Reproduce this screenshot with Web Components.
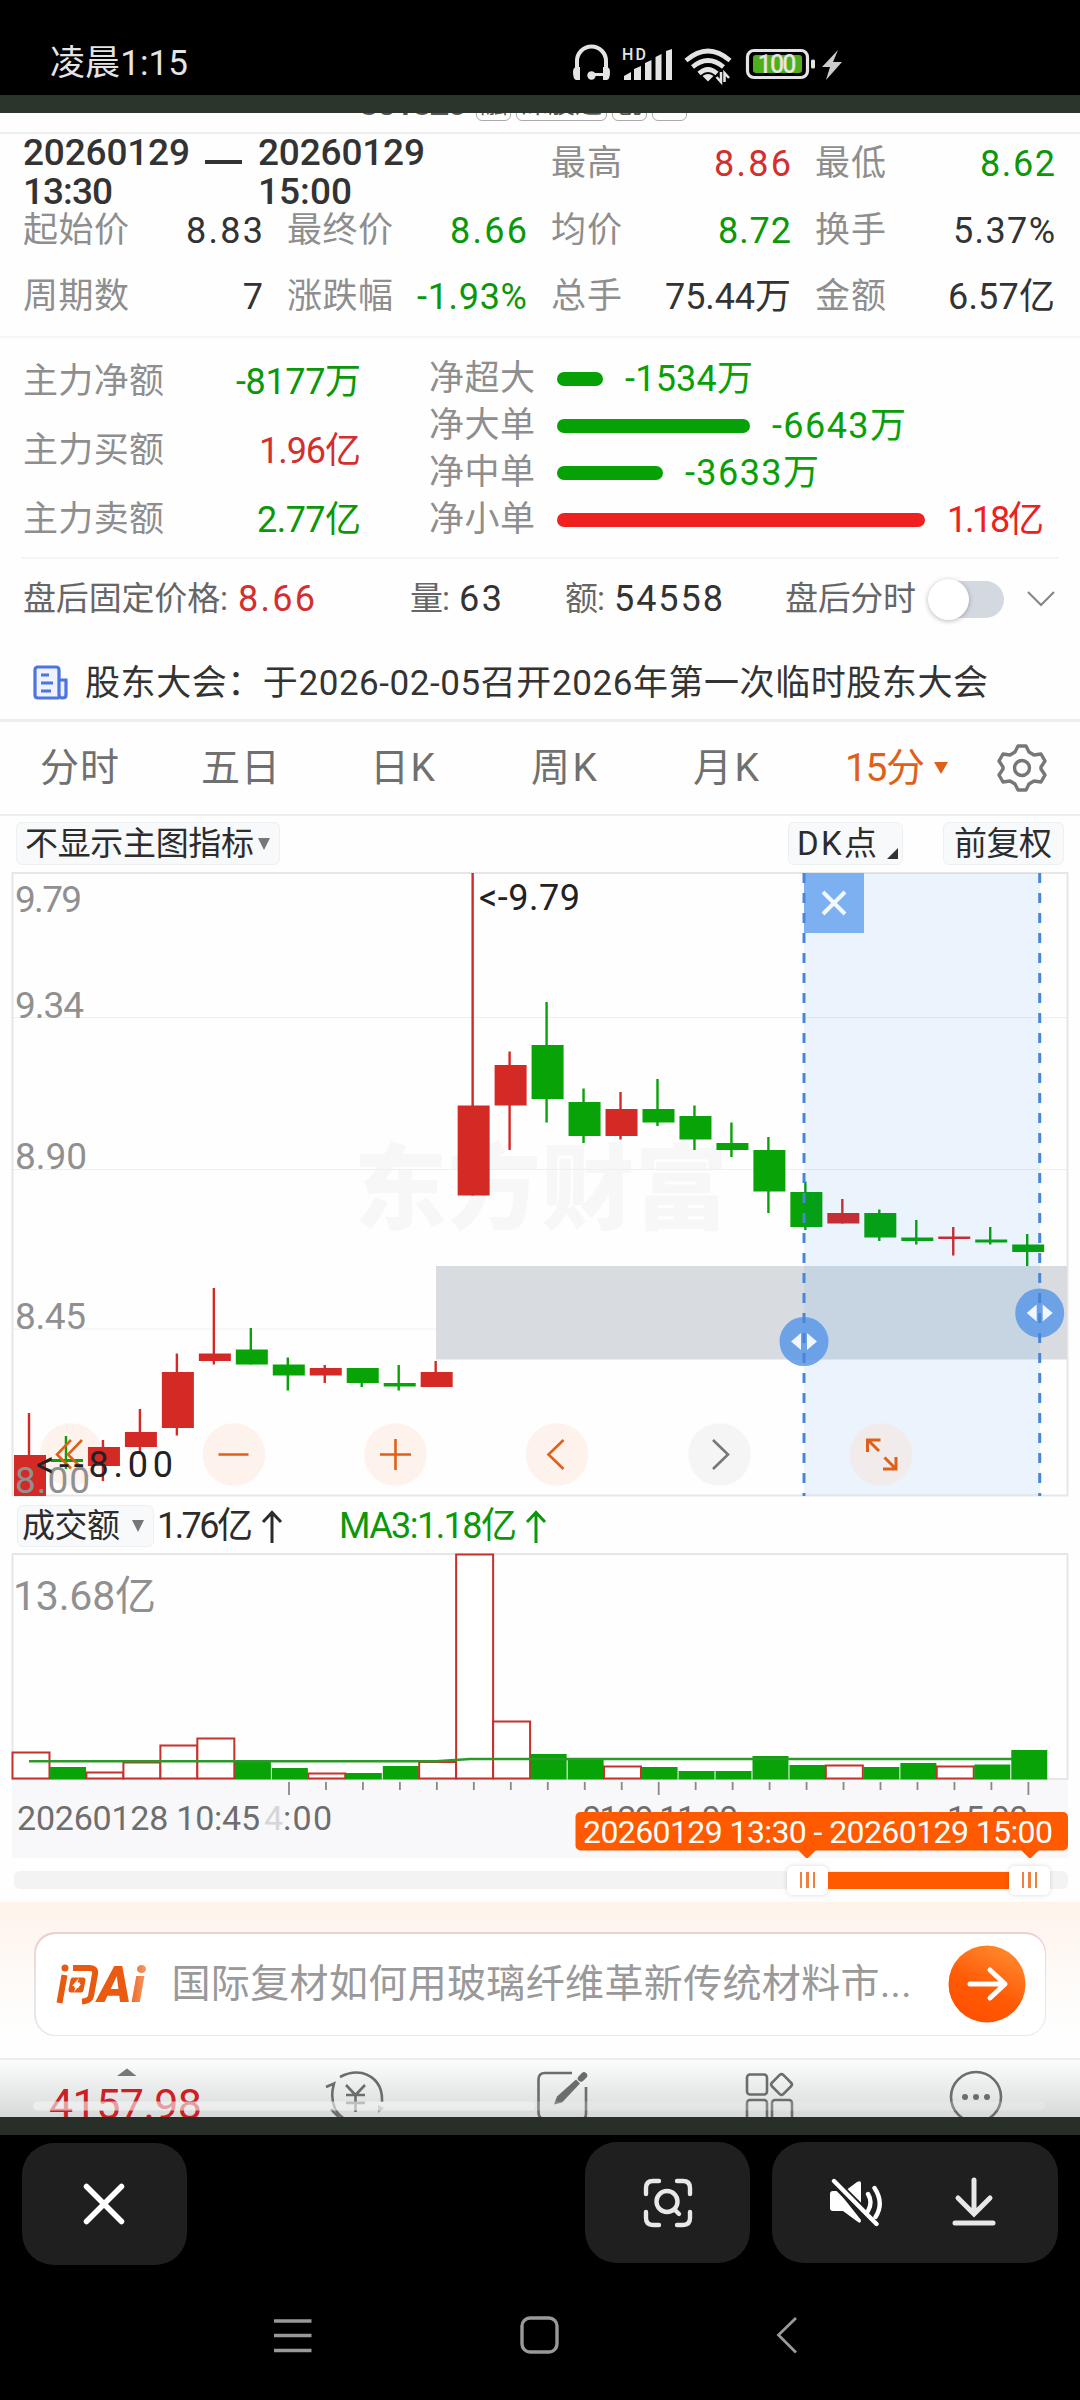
<!DOCTYPE html>
<html lang="zh-CN">
<head>
<meta charset="utf-8">
<title>K线区间统计</title>
<style>
html, body { margin: 0; padding: 0; background: #000; }
body {
    width: 1080px;
    height: 2400px;
    overflow: hidden;
    display: flex;
    flex-direction: column;
    font-family: Roboto, "Noto Sans CJK SC", sans-serif;
    font-size: 36px;
    line-height: 40px;
    color: #333;
    --up: #d32f2f;
    --down: #0a980a;
    --label: #8e8e8e;
    --brand: #e0601a;
}
main { width: 1080px; height: 2004px; overflow: hidden; background: #fefefe; display: flex; flex-direction: column; }
.strip { height: 18px; background: #2c352c; flex: none; }
.strip.low { background: #282e28; }
</style>
</head>
<body>
<status-bar time="凌晨1:15"></status-bar>
<div class="strip"></div>
<main>
    <stock-header code="301526"></stock-header>
    <range-summary></range-summary>
    <fund-flow></fund-flow>
    <after-hours></after-hours>
    <news-line><fit-text w="903">股东大会：于2026-02-05召开2026年第一次临时股东大会</fit-text></news-line>
    <period-tabs></period-tabs>
    <chart-tools></chart-tools>
    <candle-chart></candle-chart>
    <volume-head></volume-head>
    <volume-chart></volume-chart>
    <range-slider></range-slider>
    <ask-ai><fit-text w="740">国际复材如何用玻璃纤维革新传统材料市...</fit-text></ask-ai>
    <app-footer></app-footer>
</main>
<div class="strip low"></div>
<capture-bar></capture-bar>
<system-nav></system-nav>

<script>
const define = (name, html) => {
    customElements.define(name, class extends HTMLElement {
        constructor() {
            super();
            this.attachShadow({mode:"open"});
        }
        connectedCallback() {
            this.shadowRoot.innerHTML = typeof html === "function" ? html(this) : html;
        }
    });
};

define("status-bar", el => `
<style>
:host { display: flex; height: 95px; flex: none; background: #000; color: #e4e4e4; }
svg { display: block; flex: none; }
.time { font-size: 35px; line-height: 44px; padding: 42px 0 0 50px; width: 560px; box-sizing: border-box; flex: none; }
</style>
<div class="time"><fit-text w="138">${el.getAttribute("time")}</fit-text></div>
<svg width="300" height="95" viewBox="560 0 300 95" fill="#e4e4e4">
    <path d="M577 74V61a14.5 14.5 0 0 1 29 0v13" fill="none" stroke="#e4e4e4" stroke-width="4"/>
    <path d="M573 72q0-5 4-5h3v13h-4q-3-1-3-8zM610 72q0-5-4-5h-3v13h4q3-1 3-8z"/>
    <path d="M591 74.500h14" stroke="#e4e4e4" stroke-width="3"/>
    <circle cx="591.500" cy="75.500" r="4.200"/>
    <text x="622" y="60" font-size="16" font-weight="500" textLength="24">HD</text>
    <path d="M624 80v-4l7-4v8zM634 80V69l7-3v14zM645 80V63l6.500-3v20zM655.500 80V57l6-3v26zM666 80V51l6-2v31z"/>
    <g fill="none" stroke="#e4e4e4" stroke-width="4.600">
        <path d="M686 60.500q22-19 44 0"/>
        <path d="M692.500 67q15.500-13 31 0"/>
        <path d="M699 73.500q9-8 18 0"/>
    </g>
    <path d="M702.500 76q5.500-4 11 0l-5.500 5.500z"/>
    <path d="M721 72v10l-4.500-5M724.500 82V73l4.500 5" fill="none" stroke="#e4e4e4" stroke-width="2.500"/>
    <rect x="747.500" y="50.500" width="60" height="27" rx="6.500" fill="none" stroke="#e4e4e4" stroke-width="3.200"/>
    <rect x="753" y="55" width="49" height="18" rx="3" fill="#4fae1c"/>
    <rect x="811" y="59.500" width="4" height="9" rx="1.500"/>
    <text x="757.500" y="73" font-size="25" font-weight="500" textLength="39">100</text>
    <path d="M838 50l-16 17h8l-4 13 16-18h-9z" fill="#ccc"/>
</svg>`);

define("stock-header", el => `
<style>
:host { display: flex; height: 19px; flex: none; overflow: hidden; border-bottom: 2px solid #efefef; padding-left: 359px; gap: 5px; }
.code { margin-top: -30px; margin-right: 4px; font-weight: 500; color: #555; line-height: 40px; height: 40px; }
.tag { box-sizing: border-box; height: 34px; margin-top: -26px; border: 1.500px solid #aaa; border-radius: 6px; color: #555;
    font-size: 27px; line-height: 32px; text-align: center; overflow: hidden; }
</style>
<fit-text class="code" w="108">${el.getAttribute("code")}</fit-text>
<div class="tag" style="width:35px">融</div>
<div class="tag" style="width:91px">深股通</div>
<div class="tag" style="width:35px">创</div>
<div class="tag" style="width:35px"></div>`);

const cell = (label, lw, value, vw, tone) => `
<div class="cell"><fit-text class="label" w="${lw}">${label}</fit-text><fit-text class="${tone}" w="${vw}">${value}</fit-text></div>`;

define("range-summary", `
<style>
:host { display: grid; grid-template-columns: repeat(4, 238px); column-gap: 26px; grid-template-rows: 64px 66px 66px;
    height: 202px; padding: 0 25px; flex: none; border-bottom: 2px solid #f5f5f5; box-sizing: content-box; align-content: start; }
.cell { display: flex; justify-content: space-between; align-items: center; }
.cell:nth-child(-n+4) { padding-bottom: 5px; }
.label { color: var(--label); font-size: 35px; margin-left: -2px; }
.up { color: var(--up); } .down { color: var(--down); }
.span { grid-column: span 2; display: flex; font-weight: 500; font-size: 37px; line-height: 39px; margin: -1px 0 0 -2px; }
.span div { display: flex; flex-direction: column; align-items: flex-start; }
.dash { width: 37px; height: 4px; background: #333; margin: 27px 16px 0 15px; }
</style>
<div class="span">
    <div><fit-text w="167">20260129</fit-text><fit-text w="90">13:30</fit-text></div>
    <i class="dash"></i>
    <div><fit-text w="167">20260129</fit-text><fit-text w="94">15:00</fit-text></div>
</div>
${cell("最高", 71, "8.86", 77, "up")}
${cell("最低", 71, "8.62", 75, "down")}
${cell("起始价", 106, "8.83", 77, "")}
${cell("最终价", 106, "8.66", 77, "down")}
${cell("均价", 71, "8.72", 73, "down")}
${cell("换手", 71, "5.37%", 102, "")}
${cell("周期数", 106, "7", 0, "")}
${cell("涨跌幅", 106, "-1.93%", 110, "down")}
${cell("总手", 71, "75.44万", 126, "")}
${cell("金额", 71, "6.57亿", 107, "")}`);

const flow = (label, len, color, value, vw) => `
<div class="flow"><fit-text class="label" w="106">${label}</fit-text>
<i style="width:${len}px;background:${color}"></i><fit-text w="${vw}" style="color:${color}">${value}</fit-text></div>`;

define("fund-flow", `
<style>
:host { display: flex; flex: none; height: 219px; margin: 0 22px; padding: 0 3px; border-bottom: 2px solid #f4f4f4; }
.label { color: var(--label); font-size: 35px; }
.left { width: 336px; padding-top: 9px; margin-right: 68px; }
.left .label { margin-left: -2px; }
.cell { display: flex; justify-content: space-between; align-items: center; height: 69px; }
.up { color: var(--up); } .down { color: var(--down); }
.right { padding-top: 17px; }
.flow { display: flex; align-items: center; height: 47px; }
i { height: 14px; border-radius: 7px; margin: 0 22px 0 22px; }
</style>
<div class="left">
${cell("主力净额", 141, "-8177万", 125, "down")}
${cell("主力买额", 141, "1.96亿", 102, "up")}
${cell("主力卖额", 141, "2.77亿", 104, "down")}
</div>
<div class="right">
${flow("净超大", 46, "#07a007", "-1534万", 128)}
${flow("净大单", 193, "#07a007", "-6643万", 134)}
${flow("净中单", 106, "#07a007", "-3633万", 134)}
${flow("净小单", 368, "#ee2020", "1.18亿", 97)}
</div>`);

define("after-hours", `
<style>
:host { display: flex; flex: none; align-items: center; height: 80px; padding-left: 23px; }
.k { color: #666; font-size: 33px; }
.red { color: var(--up); }
.toggle { position: relative; width: 64px; height: 37px; border-radius: 19px; background: #d4d9e0; margin: 0 22px 0 24px; }
.toggle::before { content: ""; position: absolute; left: -12px; top: -2px; width: 41px; height: 41px; border-radius: 50%; background: #fff; box-shadow: 0 1px 5px rgba(0,0,0,.28); }
</style>
<fit-text class="k" w="205">盘后固定价格:</fit-text>
<fit-text class="red" w="77" style="margin:0 95px 0 10px">8.66</fit-text>
<fit-text class="k" w="40">量:</fit-text>
<fit-text w="43" style="margin:0 63px 0 9px">63</fit-text>
<fit-text class="k" w="40">额:</fit-text>
<fit-text w="109" style="margin:0 62px 0 9px">54558</fit-text>
<fit-text class="k" w="131">盘后分时</fit-text>
<div class="toggle"></div>
<svg width="30" height="20" fill="none" stroke="#888" stroke-width="2.200"><path d="M2 3l13 13L28 3"/></svg>`);

define("news-line", `
<style>
:host { display: flex; flex: none; align-items: center; height: 83px; padding: 10px 0 0 33px; gap: 17px; font-size: 35px; border-bottom: 3px solid #eee; box-sizing: border-box; }
svg { margin-top: -2px; }
</style>
<svg width="35" height="36" fill="none" stroke="#4d74e0" stroke-width="3.200">
    <path d="M26 33H5q-3 0-3-3V5q0-3 3-3h18q3 0 3 3v25q0 3 3.500 3t3.500-3V15h-7" fill="#eef3ff"/>
    <path d="M8 10h8M8 18h12M8 26h10"/>
</svg>
<slot></slot>`);

define("period-tabs", `
<style>
:host { display: flex; flex: none; align-items: center; height: 92px; font-size: 39px; color: #707070; border-bottom: 2px solid #ededed; }
.on { color: var(--brand); }
i { border: 7px solid transparent; border-top: 12px solid var(--brand); border-bottom: 0; margin: 0 49px 0 9px; }
fit-text { line-height: 50px; }
</style>
<fit-text w="79" style="margin-left:40px">分时</fit-text>
<fit-text w="79" style="margin-left:82px">五日</fit-text>
<fit-text w="65" style="margin-left:90px">日K</fit-text>
<fit-text w="66" style="margin-left:96px">周K</fit-text>
<fit-text w="66" style="margin-left:96px">月K</fit-text>
<fit-text class="on" w="80" style="margin-left:86px">15分</fit-text><i></i>
<svg width="50" height="50" viewBox="-25 -25 50 50" fill="none" stroke="#777" stroke-width="3.400" stroke-linejoin="round">
    <path d="M-4 -22h8l3 6 5 3 7-1 4 7-4 6v2l4 6-4 7-7-1-5 3-3 6h-8l-3-6-5-3-7 1-4-7 4-6v-2l-4-6 4-7 7 1 5-3z"/>
    <circle r="7.500"/>
</svg>`);

define("chart-tools", `
<style>
:host { display: flex; flex: none; height: 56px; padding: 6px 16px 0; box-sizing: border-box; font-size: 33px; color: #2c2c2c; }
.chip { display: flex; align-items: center; box-sizing: border-box; height: 43px; background: #f7f9fa; border: 1.500px solid #edf0f2; border-radius: 6px; padding-left: 8px; }
.down { border: 6.500px solid transparent; border-top: 12px solid #777; border-bottom: 0; margin-left: 4px; }
.corner { border-left: 11px solid transparent; border-bottom: 11px solid #333; margin: 20px 0 0 10px; }
</style>
<div class="chip" style="width:264px"><fit-text w="229">不显示主图指标</fit-text><i class="down"></i></div>
<div class="chip" style="width:115px;margin-left:508px"><fit-text w="80">DK点</fit-text><i class="corner"></i></div>
<div class="chip" style="width:121px;margin-left:40px;padding-left:10px"><fit-text w="98">前复权</fit-text></div>`);

const RED = "#d42a26", GREEN = "#07a307";
const STEP = 36.97;

// [rising, high, body top, body bottom, low] in canvas units
const candles = [
    [1,1413,1455,1496,1496],[0,1436,1459,1462,1469],[1,1440,1447,1466,1481],[1,1409,1432,1447,1452],
    [1,1353.5,1372,1428,1435.5],[1,1288,1353.5,1361,1364.5],[0,1328,1349.5,1364.5,1364.5],[0,1357.5,1364.5,1375.5,1390.5],
    [1,1365,1368,1375.5,1383],[0,1368,1368,1383,1387],[0,1365,1383,1386.5,1390.5],[1,1361,1372,1387,1387],
    [1,873,1105.5,1195.5,1195.5],[1,1051.5,1065,1105.5,1150],[0,1002,1045,1099,1122.5],[0,1088.5,1102,1136,1143],
    [1,1092,1109,1136,1139.5],[0,1079,1109,1122.5,1126],[0,1105.5,1116,1139.5,1150],[0,1122.5,1143,1150,1157],
    [0,1137,1150,1191.5,1213],[0,1181.5,1192,1227,1230],[1,1199,1213,1223.5,1223.5],[0,1209.5,1213,1237.5,1241],
    [0,1220,1237.5,1241,1244.5],[1,1227,1236.5,1239,1255.5],[0,1227,1239.5,1242.5,1244.5],[0,1234,1244.5,1252,1266]
];

const drawCandles = () => candles.map(([up, hi, top, bot, lo], i) => {
    const c = up ? RED : GREEN;
    const x = 14 + STEP * i;
    return `<path d="M${x+15} ${hi}V${lo}" stroke="${c}" stroke-width="2.400"/><rect x="${x}" y="${top}" width="32" height="${bot-top}" fill="${c}"/>`;
}).join("");

const axis = [["9.79",912,67],["9.34",1018,69],["8.90",1169,72],["8.45",1329,71],["8.00",1493,75]];

const handle = (x, y) => `
<circle cx="${x}" cy="${y}" r="24.500" fill="#5f9ae6" opacity=".88"/>
<path d="M${x-3} ${y-8.5}v17l-10-8.500zM${x+3} ${y-8.5}v17l10-8.500z" fill="#f0f6ff"/>`;

const round = (x, fill) => `<circle cx="${x}" cy="1454.500" r="31.300" fill="${fill}"/>`;

define("candle-chart", `
<style>
:host { display: block; flex: none; height: 626px; }
svg { display: block; }
</style>
<svg width="1080" height="626" viewBox="0 872 1080 626">
    <text x="354" y="1222" font-size="93" font-weight="900" fill="#f7f7f7" textLength="374" font-family="Noto Sans CJK SC">东方财富</text>
    <path d="M13 1017.500H1067M13 1169.500H1067M13 1329H1067" stroke="#efefef" stroke-width="1.200"/>
    <rect x="12.500" y="873" width="1055" height="622.500" fill="none" stroke="#e6e6e6" stroke-width="2"/>
    <rect x="436" y="1266" width="631" height="93.500" fill="#d8dce0"/>
    ${round(71, "#fef2ec")}${round(234, "#fef2ec")}${round(395.5, "#fef2ec")}${round(557, "#fef2ec")}${round(719.5, "#f5f5f5")}
    ${drawCandles()}
    <rect x="804" y="873" width="236" height="622" fill="#0078f5" opacity=".075"/>
    ${round(881, "#f1eceb")}
    <g fill="none" stroke="var(--brand)" stroke-width="2.600">
        <path d="M71 1440l-14 14.500 14 14M82 1440l-14 14.500 14 14"/>
        <path d="M218.500 1454.500h30M380 1454.500h31M395.500 1439v31"/>
        <path d="M563.500 1440l-15 14.500 15 14.500"/>
        <path d="M713 1440l15 14.500-15 14.500" stroke="#777"/>
        <path d="M867.500 1452v-12h13M868 1440l11 11M896 1457v12h-13M895.500 1468.500l-11-11" stroke-width="3"/>
    </g>
    <g font-size="37" fill="#909090">
        ${axis.map(([t, y, w]) => `<text x="15" y="${y}" textLength="${w}">${t}</text>`).join("")}
    </g>
    <text x="479" y="910" font-size="36" fill="#222" textLength="101">&lt;-9.79</text>
    <text x="36" y="1477" font-size="36" fill="#222" textLength="137">&lt;--8.00</text>
    <rect x="804" y="873" width="60" height="60" fill="#7cb0f0"/>
    <path d="M823 892l22 22M845 892l-22 22" stroke="#f2f8ff" stroke-width="4"/>
    ${handle(804, 1341.5)}${handle(1039.7, 1313)}
    <path d="M804 873V1496M1039.700 873V1496" stroke="#4a86d8" stroke-width="3" stroke-dasharray="10 10"/>
</svg>`);

define("volume-head", `
<style>
:host { display: flex; flex: none; align-items: center; height: 55px; padding-left: 17px; color: #2c2c2c; }
.chip { display: flex; align-items: center; box-sizing: border-box; width: 137px; height: 42px; background: #f7f9fa; border: 1.500px solid #edf0f2; border-radius: 6px; padding-left: 4px; font-size: 33px; margin-right: 3px; }
i { border: 6.500px solid transparent; border-top: 12px solid #777; border-bottom: 0; margin-left: 12px; }
svg { margin: 2px 0 0 8px; }
.ma { color: var(--down); margin-left: 56px; }
</style>
<div class="chip"><fit-text w="98">成交额</fit-text><i></i></div>
<fit-text w="96">1.76亿</fit-text>
<svg width="22" height="34" fill="none" stroke="#2c2c2c" stroke-width="3"><path d="M11 33V3M2 12l9-9.500 9 9.500"/></svg>
<fit-text class="ma" w="178">MA3:1.18亿</fit-text>
<svg width="22" height="34" fill="none" stroke="#0a980a" stroke-width="3"><path d="M11 33V3M2 12l9-9.500 9 9.500"/></svg>`);

// [rising, bar top]
const volumes = [
    [1,1752.5],[0,1767],[1,1772.5],[1,1762.5],[1,1745.5],[1,1738.5],[0,1760.5],[0,1768],[1,1773.5],[0,1773],
    [0,1766],[1,1762],[1,1554.5],[1,1721.5],[0,1754],[0,1758.5],[1,1766.5],[0,1767],[0,1771],[0,1771],
    [0,1756],[0,1765],[1,1765.5],[0,1767],[0,1763],[1,1766.5],[0,1764.5],[0,1750]
];

const drawVolumes = () => volumes.map(([up, top], i) => {
    const x = 12.5 + STEP * i;
    return up
        ? `<rect x="${x}" y="${top}" width="${STEP}" height="${1778.5-top}" fill="#fff" stroke="#c8302c" stroke-width="2"/>`
        : `<rect x="${x+.6}" y="${top}" width="${STEP-1}" height="${1779.5-top}" fill="${GREEN}"/>`;
}).join("");

const drawTicks = () => {
    let d = "";
    for(let i = 7; i < 28; i++) d += `M${30.2+STEP*i} 1782V${i % 10 === 7 ? 1795 : 1790}`;
    return d;
};

define("volume-chart", `
<style>
:host { display: block; flex: none; height: 305px; }
svg { display: block; }
</style>
<svg width="1080" height="305" viewBox="0 1553 1080 305">
    <rect x="12" y="1780" width="1056" height="78" fill="#f8f8fa"/>
    <rect x="12.500" y="1554" width="1055" height="225" fill="#fefefe" stroke="#e6e6e6" stroke-width="2"/>
    ${drawVolumes()}
    <path d="M29 1761.300H436L470 1759H1012" fill="none" stroke="#2a9a2a" stroke-width="2.400"/>
    <text x="13" y="1610" font-size="41" fill="#909090" textLength="143">13.68亿</text>
    <path d="${drawTicks()}" stroke="#888" stroke-width="1.800"/>
    <g font-size="34" fill="#6e6e6e">
        <text x="17" y="1829.500" textLength="243">20260128 10:45</text>
        <text x="264" y="1829.500" fill="#d6d6d8">4</text>
        <text x="283" y="1829.500" textLength="49">:00</text>
        <text x="582" y="1829.500" textLength="156">0129 11:00</text>
        <text x="947" y="1829.500" textLength="81">15:00</text>
    </g>
    <rect x="575.500" y="1812" width="492.500" height="38.500" rx="5" fill="#ff5a00"/>
    <path d="M798 1850h18l-9 9zM1021 1850h18l-9 9z" fill="#ff5a00"/>
    <text x="583" y="1843" font-size="32" fill="#fff" textLength="470">20260129 13:30 - 20260129 15:00</text>
</svg>`);

define("range-slider", `
<style>
:host { display: flex; flex: none; align-items: center; height: 44px; padding: 0 12px 0 14px; }
.track { display: flex; align-items: center; width: 1054px; height: 18px; border-radius: 6px; background: #f3f3f4; }
.thumb { display: flex; justify-content: center; gap: 4px; align-items: center; width: 41px; height: 29px; background: #fff; border-radius: 6px; box-shadow: 0 0 5px rgba(0,0,0,.14); }
.thumb:first-child { margin-left: 773px; }
.thumb i { width: 2.500px; height: 16px; background: #f08040; }
.fill { width: 181px; height: 17px; background: #ff5a00; }
</style>
<div class="track">
    <div class="thumb"><i></i><i></i><i></i></div><div class="fill"></div><div class="thumb"><i></i><i></i><i></i></div>
</div>`);

define("ask-ai", `
<style>
:host { display: block; flex: none; height: 158px; padding: 30px 34px 0; box-sizing: border-box; border-bottom: 2px solid #ececec;
    background: linear-gradient(#fef3eb 0, #fefcfa 60%, #fefefe 85%); }
.edge { height: 104px; border-radius: 21px; padding: 1.500px; box-sizing: border-box; background: linear-gradient(#edcfca, #e8e6ea 60%, #e6e8ec); }
.box { display: flex; align-items: center; height: 100%; border-radius: 20px; background: #fff; color: #999; font-size: 39px; box-sizing: border-box; padding: 0 19px; }
.logo { margin-right: 25px; flex: none; }
.go { margin-left: auto; flex: none; }
</style>
<div class="edge"><div class="box">
    <svg class="logo" width="92" height="44" viewBox="54 1961 92 44">
        <defs><linearGradient id="a" x1="0" x2="1"><stop offset=".6" stop-color="#ea5a10"/><stop offset="1" stop-color="#f69a6c"/></linearGradient></defs>
        <g fill="none" stroke="#e85a10" stroke-width="6" stroke-linejoin="round">
            <path d="M63.500 1974l-5 28M72 1967h17q6 0 5 6l-4 22q-1 5-9 5.500"/>
            <path d="M72 1979h10l-2 10h-10z" stroke-width="5"/>
        </g>
        <circle cx="64" cy="1967" r="3.500" fill="#e85a10"/>
        <text x="97" y="2001" font-size="50" font-weight="900" font-style="italic" fill="url(#a)" textLength="47" lengthAdjust="spacingAndGlyphs">Ai</text>
        <path d="M78 1977l-7 8h4l-2 6 7-8h-4z" fill="#fff"/>
    </svg>
    <slot></slot>
    <svg class="go" width="78" height="78" viewBox="-39 -39 78 78">
        <defs><linearGradient id="g" x1=".8" y1="0" x2=".3" y2="1"><stop stop-color="#ff8c30"/><stop offset=".6" stop-color="#ff5a05"/><stop offset="1" stop-color="#ff5000"/></linearGradient></defs>
        <circle r="38.500" fill="url(#g)"/>
        <path d="M-17 0h34M3 -14l15 14L3 14" fill="none" stroke="#fff" stroke-width="5" stroke-linecap="round" stroke-linejoin="round"/>
    </svg>
</div></div>`);

define("app-footer", `
<style>
:host { display: block; flex: none; height: 57px; background: linear-gradient(#fbfcfc, #e6e8e8 60%, #d6d9d9); }
svg { display: block; }
</style>
<svg width="1080" height="57" viewBox="0 2060 1080 57" fill="none" stroke="#6c6c6c" stroke-width="2.600">
    <path d="M117 2076l10-7.500 9.500 7.500z" fill="#777" stroke="none"/>
    <text x="49" y="2119" font-size="43" fill="#cc2024" stroke="none" textLength="153">4157.98</text>
    <path d="M340 2077q11-6 22-4 21 6 20 29M331 2109q4 5 8 8M326 2087l8-3.500q-4 14 1 25q3 6 8 9" />
    <path d="M346 2085l9.500 10 9.500-10M355.500 2095v17M346 2095h19M346 2103h19"/>
    <path d="M378 2105l6 3-6 5z" fill="#999" stroke="none"/>
    <path d="M572 2073h-27q-6.500 0-6.500 6.500v33q0 6 7 8M586 2087v27q0 5-6 6"/>
    <path d="M554 2104.500l3-8 19-17 4 4-18 19z" fill="#6c6c6c" stroke="none"/>
    <path d="M581 2078.500l3-3" stroke-width="6.500" stroke-linecap="round"/>
    <rect x="747" y="2074.500" width="20" height="20" rx="3"/>
    <rect x="747" y="2100" width="20" height="20" rx="3"/>
    <rect x="772" y="2100" width="20" height="20" rx="3"/>
    <rect x="773.500" y="2076.500" width="16" height="16" rx="2.500" transform="rotate(45 781.500 2084.500)"/>
    <circle cx="976" cy="2097" r="25"/>
    <g fill="#6c6c6c" stroke="none"><circle cx="965" cy="2097" r="3"/><circle cx="976" cy="2097" r="3"/><circle cx="987" cy="2097" r="3"/></g>
    <rect x="33" y="2101.500" width="1012" height="9" rx="4.500" fill="#fff" opacity=".18" stroke="none"/>
    <rect x="33" y="2101.500" width="502" height="9" rx="4.500" fill="#f4f4f4" opacity=".5" stroke="none"/>
</svg>`);

define("capture-bar", `
<style>
:host { display: flex; flex: none; height: 165px; box-sizing: border-box; padding: 7px 22px 0; align-items: flex-start; }
div { display: flex; align-items: center; justify-content: center; background: #1f1f1f; border-radius: 32px; width: 165px; height: 121px; }
.x { height: 122px; margin: 1px auto 0 0; }
.x svg { margin-right: 1px; }
.pair { width: 286px; margin-left: 22px; gap: 66px; box-sizing: border-box; padding-right: 6px; }
svg { fill: none; stroke: #e8e8e8; stroke-width: 4.400; stroke-linecap: round; }
</style>
<div class="x"><svg width="48" height="48" viewBox="-24 -24 48 48"><path d="M-17.500 -17.500L17.500 17.500M17.500 -17.500L-17.500 17.500" stroke="#fff" stroke-width="5.500"/></svg></div>
<div><svg width="54" height="54" viewBox="-27 -27 54 54">
    <path d="M-22 -9v-6q0-7 7-7h6M22 -9v-6q0-7-7-7h-6M-22 9v6q0 7 7 7h6M22 9v6q0 7-7 7h-6"/>
    <circle cx="-1" cy="-1.500" r="10.500"/><path d="M7 7l4 4"/>
</svg></div>
<div class="pair">
    <svg width="58" height="50" viewBox="826 2178 58 50">
        <path d="M829 2194q0-3 3-3h5l23 29q0 4-3 2l-15-11h-10q-3 0-3-3z" fill="#fff" stroke="none"/>
        <path d="M844 2191l12-9q4-2 4 1v28z" fill="#fff" stroke="none"/>
        <path d="M832.500 2181.500l43 43" stroke="#1f1f1f" stroke-width="9"/>
        <path d="M833 2181l42.500 43" stroke="#fff"/>
        <path d="M867 2194q5 8 0 17M873.500 2188q10 15 1 29" stroke="#fff"/>
    </svg>
    <svg width="46" height="52" viewBox="952 2176 46 52"><path d="M975 2179v33M959 2197l16 16 16-16M956 2222h38" stroke-width="5"/></svg>
</div>`);

define("system-nav", `
<style>
:host { display: block; flex: none; height: 100px; }
svg { display: block; }
</style>
<svg width="1080" height="100" viewBox="0 2300 1080 100" fill="none" stroke="#999">
    <path d="M274 2321h37.500M274 2335.500h37.500M274 2350.500h37.500" stroke-width="3.600"/>
    <rect x="522" y="2318" width="35" height="34" rx="8" stroke-width="3.400"/>
    <path d="M796 2318l-17.500 17 17.500 17.500" stroke-width="2.800"/>
</svg>`);

// text that is tracked in or out until it takes exactly w pixels
class FitText extends HTMLElement {
    constructor() {
        super();
        this.attachShadow({mode:"open"}).innerHTML = `
<style>
:host { display: inline-block; white-space: nowrap; flex: none; }
span { display: inline-block; }
</style>
<span><slot></slot></span>`;
    }
    connectedCallback() {
        const w = parseFloat(this.getAttribute("w"));
        const n = this.textContent.length;
        if(!w || n < 2) return;
        const span = this.shadowRoot.querySelector("span");
        const gap = (w - span.getBoundingClientRect().width) / (n - 1);
        span.style.letterSpacing = gap + "px";
        span.style.marginRight = -gap + "px";
    }
}
// goes last: it measures in the font sizes its parents have set
customElements.define("fit-text", FitText);
</script>
</body>
</html>
